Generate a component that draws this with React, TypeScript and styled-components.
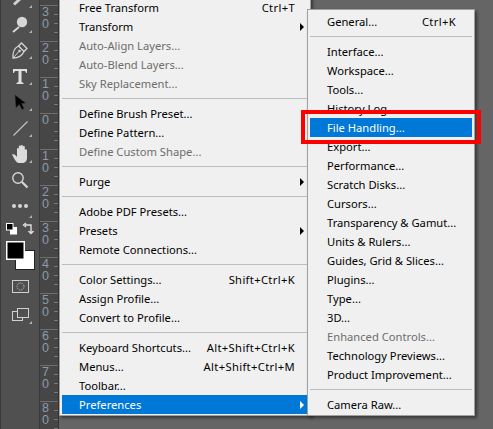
import React from "react";
import styled, { createGlobalStyle } from "styled-components";

const Global = createGlobalStyle`
  html, body { margin: 0; padding: 0; background: #666; }
  #root { width: 493px; height: 429px; }
`;

const Page = styled.div`
  display: flex;
  width: 493px;
  height: 429px;
  overflow: hidden;
  background: #656565;
  font-family: "Noto Sans", "Open Sans", sans-serif;
`;

const Toolbar = styled.div`
  width: 38px;
  height: 429px;
  flex: none;
  background: #505050;
  border-left: 1px solid #3a3a3a;
  border-right: 1px solid #3a3a3a;
  display: flex;
  flex-direction: column;
  align-items: center;
`;

const ToolSlot = styled.div<{ $h: number }>`
  height: ${(p) => p.$h}px;
  width: 38px;
  flex: none;
  position: relative;
  display: flex;
  align-items: center;
  justify-content: center;
`;

const Corner = styled.span<{ $b?: number }>`
  position: absolute;
  right: 7px;
  bottom: ${(p) => p.$b ?? 4}px;
  width: 0;
  height: 0;
  border-left: 3px solid transparent;
  border-bottom: 3px solid #b4b4b4;
`;

const Ruler = styled.div`
  width: 18px;
  height: 429px;
  flex: none;
  background: #464646;
  border-right: 1px solid #333;
  overflow: hidden;
`;

const RulerLead = styled.div`
  height: 5px;
`;

const RulerCell = styled.div`
  height: 35px;
  border-top: 1px solid #6e6e6e;
  background: repeating-linear-gradient(
    to bottom,
    transparent 0 8px,
    #787878 8px 9px
  ) right top / 4px 100% no-repeat;
`;

const RulerDigits = styled.div`
  width: 8px;
  margin-left: 2px;
  font-size: 12.5px;
  line-height: 12px;
  word-break: break-all;
  color: #8f9aa8;
  font-family: "Liberation Sans", sans-serif;
`;

const Canvas = styled.div`
  flex: 1;
  position: relative;
  background: #656565;
`;

const Menu = styled.div<{ $left: number; $top: number; $w: number; $h: number; $pt: number }>`
  position: absolute;
  left: ${(p) => p.$left}px;
  top: ${(p) => p.$top}px;
  width: ${(p) => p.$w}px;
  height: ${(p) => p.$h}px;
  padding: ${(p) => p.$pt}px 2px 0;
  box-sizing: border-box;
  background: #f0f0f0;
  border: 1px solid #a0a0a0;
  box-shadow: 2px 2px 3px rgba(0, 0, 0, 0.45);
  display: flex;
  flex-direction: column;
`;

const Row = styled.div<{ $active?: boolean; $off?: boolean; $padR: number }>`
  height: 19px;
  flex: none;
  display: flex;
  align-items: center;
  justify-content: space-between;
  padding: 0 ${(p) => p.$padR}px 0 17px;
  font-size: 11.2px;
  white-space: nowrap;
  position: relative;
  background: ${(p) => (p.$active ? "#0078d7" : "transparent")};
  color: ${(p) => (p.$active ? "#fff" : p.$off ? "#6d6d6d" : "#000")};
`;

const Shortcut = styled.span`
  letter-spacing: 0.35px;
`;

const Sep = styled.div`
  height: 1px;
  flex: none;
  margin: 5px 0;
  background: #bdbdbd;
`;

const Arrow = styled.span<{ $light?: boolean }>`
  position: absolute;
  right: 4px;
  top: 6px;
  width: 0;
  height: 0;
  border-left: 4px solid ${(p) => (p.$light ? "#fff" : "#000")};
  border-top: 4px solid transparent;
  border-bottom: 4px solid transparent;
`;

const Callout = styled.div`
  position: absolute;
  left: 242px;
  top: 110px;
  width: 180px;
  height: 34px;
  box-sizing: border-box;
  border: 4px solid #f00;
`;

type Item = { t?: string; k?: string; off?: boolean; sub?: boolean; active?: boolean; sep?: boolean };

const main: Item[] = [
  { t: "Free Transform", k: "Ctrl+T" },
  { t: "Transform", sub: true },
  { t: "Auto-Align Layers...", off: true },
  { t: "Auto-Blend Layers...", off: true },
  { t: "Sky Replacement...", off: true },
  { sep: true },
  { t: "Define Brush Preset..." },
  { t: "Define Pattern..." },
  { t: "Define Custom Shape...", off: true },
  { sep: true },
  { t: "Purge", sub: true },
  { sep: true },
  { t: "Adobe PDF Presets..." },
  { t: "Presets", sub: true },
  { t: "Remote Connections..." },
  { sep: true },
  { t: "Color Settings...", k: "Shift+Ctrl+K" },
  { t: "Assign Profile..." },
  { t: "Convert to Profile..." },
  { sep: true },
  { t: "Keyboard Shortcuts...", k: "Alt+Shift+Ctrl+K" },
  { t: "Menus...", k: "Alt+Shift+Ctrl+M" },
  { t: "Toolbar..." },
  { t: "Preferences", sub: true, active: true },
];

const prefs: Item[] = [
  { t: "General...", k: "Ctrl+K" },
  { sep: true },
  { t: "Interface..." },
  { t: "Workspace..." },
  { t: "Tools..." },
  { t: "History Log..." },
  { t: "File Handling...", active: true },
  { t: "Export..." },
  { t: "Performance..." },
  { t: "Scratch Disks..." },
  { t: "Cursors..." },
  { t: "Transparency & Gamut..." },
  { t: "Units & Rulers..." },
  { t: "Guides, Grid & Slices..." },
  { t: "Plugins..." },
  { t: "Type..." },
  { t: "3D..." },
  { t: "Enhanced Controls...", off: true },
  { t: "Technology Previews..." },
  { t: "Product Improvement..." },
  { sep: true },
  { t: "Camera Raw..." },
];

const Rows = ({ items, padR }: { items: Item[]; padR: number }) => (
  <>
    {items.map((it, i) =>
      it.sep ? (
        <Sep key={i} />
      ) : (
        <Row key={i} $active={it.active} $off={it.off} $padR={padR}>
          <span>{it.t}</span>
          {it.k && <Shortcut>{it.k}</Shortcut>}
          {it.sub && <Arrow $light={it.active} />}
        </Row>
      )
    )}
  </>
);

const Ico = styled.svg`
  display: block;
  overflow: visible;
`;

const rulerLabels = ["30", "20", "10", "0", "10", "20", "30", "40", "50", "60", "70", "80"];

export default function App() {
  return (
    <Page>
      <Global />
      <Toolbar>
        <ToolSlot $h={11}>
          <Ico width="14" height="11" viewBox="0 0 14 11">
            <path d="M1 4.5 L7 -1" stroke="#d0d0d0" strokeWidth="3" fill="none" />
          </Ico>
          <Corner $b={3} />
        </ToolSlot>
        <ToolSlot $h={26}>
          <Ico width="16" height="17" viewBox="0 0 16 17">
            <circle cx="10" cy="6" r="5.2" fill="#d6d6d6" />
            <path d="M1 16 L7 11" stroke="#d6d6d6" strokeWidth="2" />
          </Ico>
          <Corner />
        </ToolSlot>
        <ToolSlot $h={26}>
          <Ico width="16" height="17" viewBox="0 0 16 17">
            <path d="M1 16 C0.5 11 2.5 6 6.5 4 L12 9.5 C10 14 6 16 1 16 Z" fill="none" stroke="#d6d6d6" strokeWidth="1.3" />
            <path d="M1 16 L6.5 10" stroke="#d6d6d6" strokeWidth="1" />
            <circle cx="7.5" cy="9" r="1.3" fill="#d6d6d6" />
            <path d="M6.5 4 L9.5 1 L15 6.5 L12 9.5" fill="none" stroke="#d6d6d6" strokeWidth="1.3" />
          </Ico>
          <Corner />
        </ToolSlot>
        <ToolSlot $h={26}>
          <Ico width="14" height="15" viewBox="0 0 14 15">
            <path d="M0 0 H14 V4 H13 C13 2.5 12 2 11 2 H8.5 V13 L10.5 14 V15 H3.5 V14 L5.5 13 V2 H3 C2 2 1 2.5 1 4 H0 Z" fill="#e0e0e0" />
          </Ico>
          <Corner />
        </ToolSlot>
        <ToolSlot $h={26}>
          <Ico width="11" height="15" viewBox="0 0 11 15">
            <path d="M0 0 L10.5 8 L6.5 8.5 L9 13.5 L7 14.5 L4.5 9.5 L1 12.5 Z" fill="#000" stroke="#333" strokeWidth="0.5" />
          </Ico>
          <Corner />
        </ToolSlot>
        <ToolSlot $h={26}>
          <Ico width="15" height="15" viewBox="0 0 15 15">
            <path d="M0.5 14.5 L14.5 0.5" stroke="#c8c8c8" strokeWidth="1.1" />
          </Ico>
          <Corner />
        </ToolSlot>
        <ToolSlot $h={26}>
          <Ico width="17" height="18" viewBox="0 0 17 18">
            <path d="M0 9.5 C2 8.5 3.5 10 5 12 V4 C5 2.6 6.5 2.6 6.8 4 V1.5 C6.8 0 8.8 0 8.8 1.5 V1 C8.8 -0.3 10.8 -0.3 10.8 1 V2 C10.8 0.8 12.8 0.8 12.8 2 V5 C12.8 4 15 4 15 5.5 V13 C15 16 13 18 10 18 H7 C4 18 2 13 0 9.5 Z" fill="#dcdcdc" />
          </Ico>
          <Corner />
        </ToolSlot>
        <ToolSlot $h={26}>
          <Ico width="16" height="16" viewBox="0 0 16 16">
            <circle cx="6" cy="6" r="5.2" fill="none" stroke="#d6d6d6" strokeWidth="1.4" />
            <path d="M10 10 L15.5 15.5" stroke="#d6d6d6" strokeWidth="2.2" />
          </Ico>
        </ToolSlot>
        <ToolSlot $h={26}>
          <Ico width="16" height="4" viewBox="0 0 16 4">
            <circle cx="2" cy="2" r="2" fill="#d6d6d6" />
            <circle cx="8" cy="2" r="2" fill="#d6d6d6" />
            <circle cx="14" cy="2" r="2" fill="#d6d6d6" />
          </Ico>
          <Corner $b={1} />
        </ToolSlot>
        <ToolSlot $h={20}>
          <Ico width="28" height="12" viewBox="0 0 28 12">
            <rect x="4" y="4" width="7" height="7.5" fill="#fff" />
            <rect x="0.5" y="0.5" width="6.5" height="6.5" fill="#000" stroke="#fff" />
            <path d="M19 2 H25 V10 M22.5 8 L25 10.5 L27.5 8 M20 0 L17.5 2 L20 4" fill="none" stroke="#e0e0e0" strokeWidth="1.4" />
          </Ico>
        </ToolSlot>
        <ToolSlot $h={32}>
          <Ico width="29" height="29" viewBox="0 0 29 29">
            <rect x="9.5" y="9.5" width="19" height="19" fill="#fff" stroke="#222" />
            <rect x="0.75" y="0.75" width="17.5" height="17.5" fill="#000" stroke="#fff" strokeWidth="1.5" />
          </Ico>
        </ToolSlot>
        <ToolSlot $h={30}>
          <Ico width="17" height="13" viewBox="0 0 17 13">
            <rect x="0.5" y="0.5" width="16" height="12" fill="none" stroke="#d0d0d0" />
            <circle cx="8.5" cy="6.5" r="3.5" fill="none" stroke="#d0d0d0" strokeDasharray="1 1" />
          </Ico>
        </ToolSlot>
        <ToolSlot $h={26}>
          <Ico width="17" height="13" viewBox="0 0 17 13">
            <rect x="0.5" y="3.5" width="10" height="9" fill="none" stroke="#d0d0d0" />
            <rect x="5.5" y="0.5" width="11" height="9" fill="#505050" stroke="#d0d0d0" />
          </Ico>
          <Corner $b={3} />
        </ToolSlot>
      </Toolbar>
      <Ruler>
        <RulerLead />
        {rulerLabels.map((n, i) => (
          <RulerCell key={i}>
            <RulerDigits>{n}</RulerDigits>
          </RulerCell>
        ))}
      </Ruler>
      <Canvas>
        <Menu $left={0} $top={-6} $w={252} $h={422} $pt={3}>
          <Rows items={main} padR={13} />
        </Menu>
        <Menu $left={248} $top={9} $w={168} $h={407} $pt={2}>
          <Rows items={prefs} padR={16} />
        </Menu>
        <Callout />
      </Canvas>
    </Page>
  );
}
